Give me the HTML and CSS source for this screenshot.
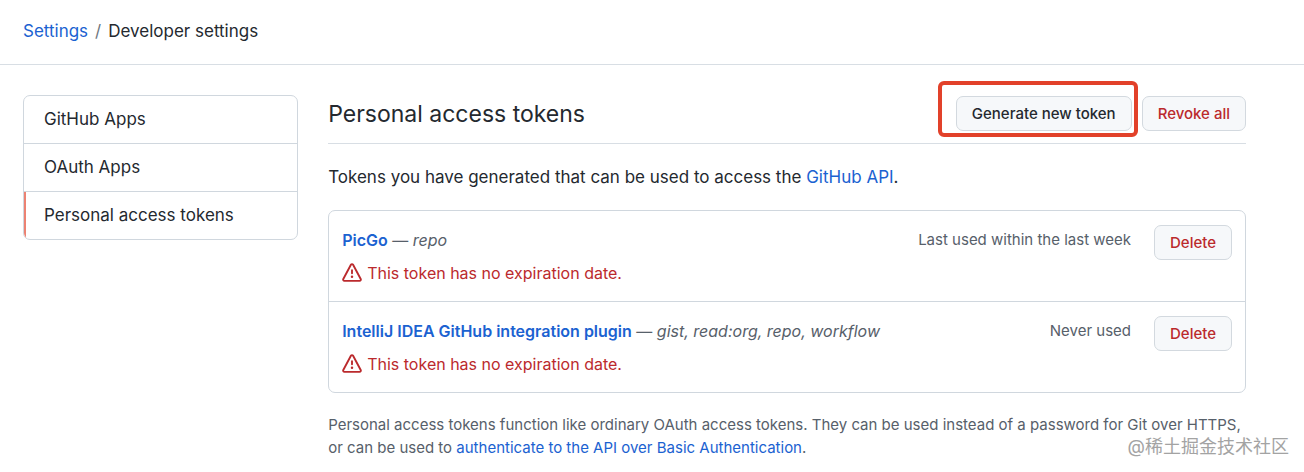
FILE: index.html
```
<!DOCTYPE html>
<html lang="en">
<head>
  <meta charset="UTF-8" />
  <meta name="viewport" content="width=device-width, initial-scale=1.0"/>
  <title>Personal access tokens</title>
  <link rel="stylesheet" href="styles.css">
</head>
<body>

  <header class="breadcrumb">
    <a href="#settings">Settings</a>
    <span class="separator">/</span>
    <span>Developer settings</span>
  </header>

  <div class="layout">
    <nav class="menu">
      <a class="menu-item" href="#apps">GitHub Apps</a>
      <a class="menu-item" href="#oauth">OAuth Apps</a>
      <a class="menu-item selected" href="#tokens">Personal access tokens</a>
    </nav>

    <main class="content">
      <div class="subhead">
        <h1>Personal access tokens</h1>
        <div class="actions">
          <div class="highlight">
            <button class="btn" type="button">Generate new token</button>
          </div>
          <button class="btn btn-danger" type="button">Revoke all</button>
        </div>
      </div>

      <p class="intro">Tokens you have generated that can be used to access the <a href="#api">GitHub API</a>.</p>

      <ul class="token-list">
        <li class="token">
          <div class="token-info">
            <p class="token-name"><a href="#picgo">PicGo</a> — <em>repo</em></p>
            <p class="warning">
              <svg class="icon" viewBox="0 0 16 16" aria-hidden="true"><path fill-rule="evenodd" d="M8.22 1.754a.25.25 0 00-.44 0L1.698 13.132a.25.25 0 00.22.368h12.164a.25.25 0 00.22-.368L8.22 1.754zm-1.763-.707c.659-1.234 2.427-1.234 3.086 0l6.082 11.378A1.75 1.75 0 0114.082 15H1.918a1.75 1.75 0 01-1.543-2.575L6.457 1.047zM9 11a1 1 0 11-2 0 1 1 0 012 0zm-.25-5.25a.75.75 0 00-1.5 0v2.5a.75.75 0 001.5 0v-2.5z"/></svg>
              This token has no expiration date.
            </p>
          </div>
          <span class="last-used">Last used within the last week</span>
          <button class="btn btn-danger" type="button">Delete</button>
        </li>
        <li class="token">
          <div class="token-info">
            <p class="token-name"><a href="#intellij">IntelliJ IDEA GitHub integration plugin</a> — <em>gist, read:org, repo, workflow</em></p>
            <p class="warning">
              <svg class="icon" viewBox="0 0 16 16" aria-hidden="true"><path fill-rule="evenodd" d="M8.22 1.754a.25.25 0 00-.44 0L1.698 13.132a.25.25 0 00.22.368h12.164a.25.25 0 00.22-.368L8.22 1.754zm-1.763-.707c.659-1.234 2.427-1.234 3.086 0l6.082 11.378A1.75 1.75 0 0114.082 15H1.918a1.75 1.75 0 01-1.543-2.575L6.457 1.047zM9 11a1 1 0 11-2 0 1 1 0 012 0zm-.25-5.25a.75.75 0 00-1.5 0v2.5a.75.75 0 001.5 0v-2.5z"/></svg>
              This token has no expiration date.
            </p>
          </div>
          <span class="last-used">Never used</span>
          <button class="btn btn-danger" type="button">Delete</button>
        </li>
      </ul>

      <p class="note">Personal access tokens function like ordinary OAuth access tokens. They can be used instead of a password for Git over HTTPS, or can be used to <a href="#auth">authenticate to the API over Basic Authentication</a>.</p>
    </main>
  </div>

  <div class="watermark" lang="zh">@稀土掘金技术社区</div>

</body>
</html>
```
FILE: styles.css
```
* {
  box-sizing: border-box;
}

body {
  margin: 0;
  font-family: Inter, "Noto Sans CJK SC", sans-serif;
  font-size: 17px;
  line-height: 24px;
  color: #24292f;
  background: #fff;
}

h1,
p,
ul {
  margin: 0;
  padding: 0;
}

a {
  color: #1b62d1;
  text-decoration: none;
}

.breadcrumb {
  display: flex;
  gap: 7px;
  padding: 19px 23px 21px;
  border-bottom: 1px solid #d8dee4;
}

.separator {
  color: #6e7781;
}

.layout {
  display: flex;
  align-items: flex-start;
  gap: 30px;
  padding: 30px 58px 0 23px;
}

.menu {
  flex: 0 0 22.5%;
  border: 1px solid #d0d7de;
  border-radius: 7px;
  overflow: hidden;
}

.menu-item {
  display: block;
  padding: 11px 20px 12px;
  color: #24292f;
}

.menu-item + .menu-item {
  border-top: 1px solid #d0d7de;
}

.menu-item.selected {
  box-shadow: inset 2px 0 #ec8272;
}

.content {
  flex: 1;
}

.subhead {
  display: flex;
  justify-content: space-between;
  align-items: flex-start;
  padding-bottom: 10px;
  border-bottom: 1px solid #d8dee4;
}

h1 {
  font-size: 23px;
  font-weight: 400;
  line-height: 38px;
}

.actions {
  display: flex;
  gap: 10px;
  padding-top: 1px;
}

.btn {
  height: 35px;
  padding: 0 15px;
  font-family: inherit;
  font-size: 15px;
  font-weight: 500;
  line-height: 20px;
  color: #24292f;
  background: #f6f8fa;
  border: 1px solid #d3d9df;
  border-radius: 7px;
  cursor: pointer;
}

.btn:hover {
  background: #f3f4f6;
}

.btn-danger {
  color: #bb2a2d;
}

.highlight {
  position: relative;
}

/* red frame round the button */
.highlight::after {
  content: "";
  position: absolute;
  inset: -15px -6px -6px -18px;
  border: 4px solid #e2412a;
  border-radius: 6px;
  pointer-events: none;
}

.intro {
  margin: 21px 0;
}

.token-list {
  list-style: none;
  border: 1px solid #d0d7de;
  border-radius: 7px;
}

.token {
  display: flex;
  align-items: flex-start;
  padding: 14px 13px 12px;
}

.token + .token {
  border-top: 1px solid #d0d7de;
}

.token-info {
  flex: 1;
  font-size: 16px;
}

.token-name,
.last-used,
.note {
  color: #57606a;
}

.token-name {
  line-height: 30px;
}

.token-name a {
  font-weight: 600;
}

.warning {
  display: flex;
  align-items: center;
  gap: 5px;
  margin-top: 2px;
  line-height: 32px;
  color: #bb2a2d;
}

.icon {
  width: 20px;
  height: 20px;
  fill: currentColor;
}

.last-used {
  margin-right: 23px;
  font-size: 15px;
  line-height: 30px;
}

.note {
  margin-top: 20px;
  font-size: 15px;
  line-height: 23px;
}

.watermark {
  position: absolute;
  right: 15px;
  bottom: 15px;
  font-size: 18px;
  line-height: 20px;
  color: #a3a3a3;
}
```
